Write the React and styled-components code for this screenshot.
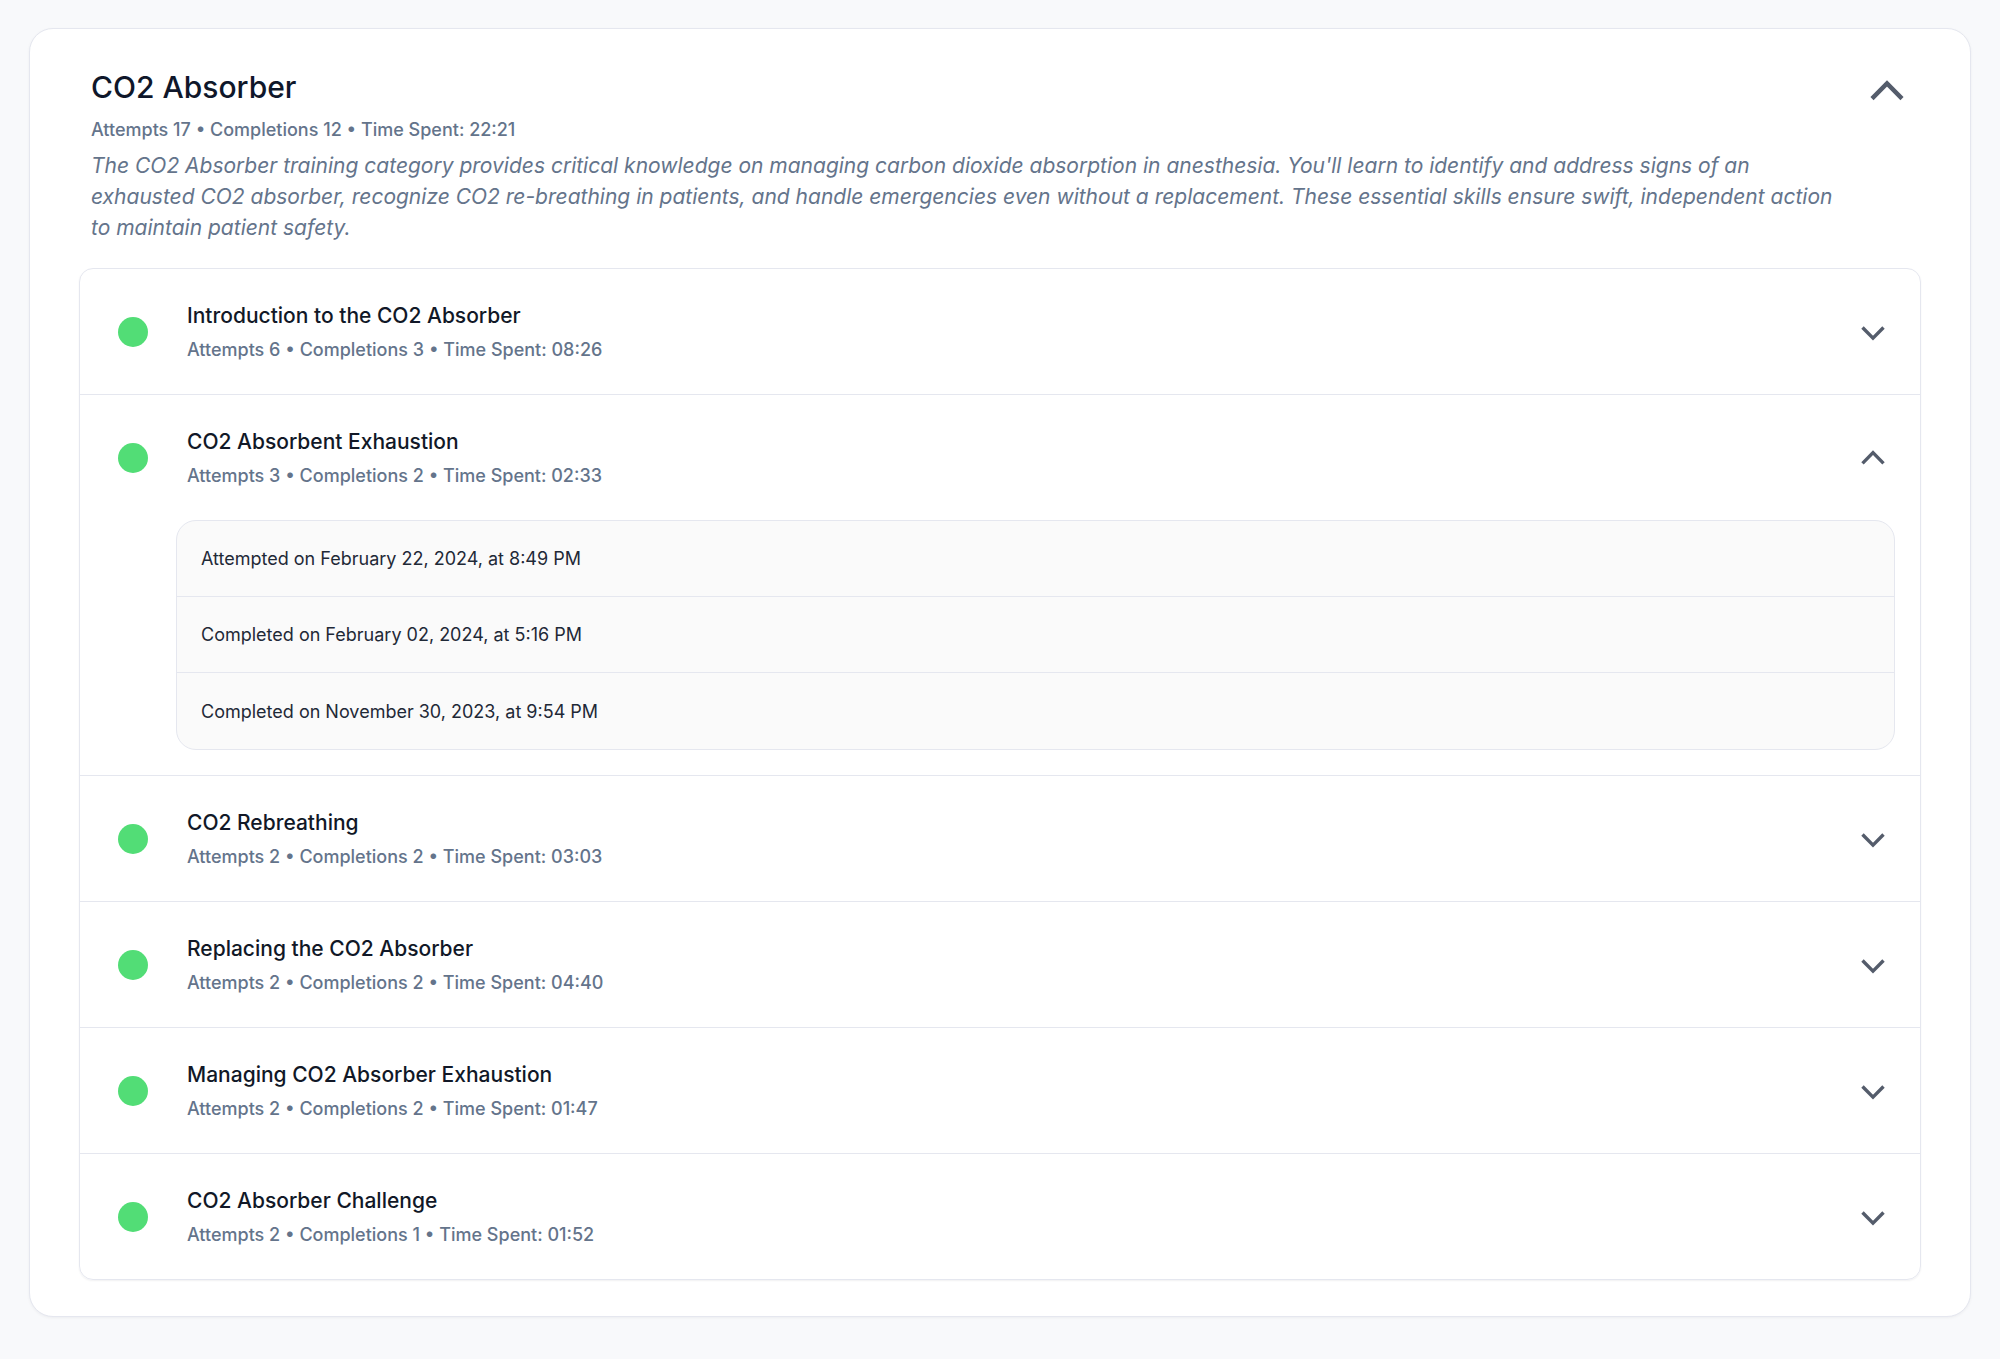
import React, { useState } from 'react';
import styled, { createGlobalStyle } from 'styled-components';

const GlobalStyle = createGlobalStyle`
  * {
    box-sizing: border-box;
  }

  body {
    margin: 0;
    background: #f8f9fb;
    font-family: Inter, "Noto Sans", sans-serif;
    color: #111827;
  }
`;

const Page = styled.div`
  min-height: 100vh;
  padding: 28px 29px;
`;

const Card = styled.section`
  background: #fff;
  border: 1px solid #e5e7ef;
  border-radius: 24px;
  box-shadow: 0 1px 3px rgba(15, 23, 42, 0.05);
  padding: 40px 49px 36px;
`;

const CategoryHeader = styled.header`
  display: flex;
  align-items: flex-start;
  gap: 24px;
  padding: 0 14px 0 12px;
  margin-bottom: 25px;
`;

const HeaderText = styled.div`
  flex: 1;
  min-width: 0;
`;

const CategoryTitle = styled.h1`
  margin: 0;
  font-size: 30px;
  line-height: 36px;
  font-weight: 500;
  color: #0f172a;
`;

const Stats = styled.p`
  margin: ${(p) => (p.large ? '13px' : '8px')} 0 0;
  font-size: 18px;
  line-height: 24px;
  font-weight: 500;
  color: #64748b;
`;

const Description = styled.p`
  margin: 8px 0 0;
  font-size: 21px;
  line-height: 31px;
  font-style: italic;
  color: #64748b;
`;

const ToggleButton = styled.button`
  display: flex;
  align-items: center;
  justify-content: center;
  flex-shrink: 0;
  padding: 0;
  border: none;
  background: none;
  cursor: pointer;
  color: #545c6b;
  margin-top: ${(p) => (p.large ? '2px' : '0')};
`;

const ModuleList = styled.ul`
  list-style: none;
  margin: 0;
  padding: 0;
  border: 1px solid #e5e7ef;
  border-radius: 14px;
  box-shadow: 0 1px 2px rgba(15, 23, 42, 0.06);
  overflow: hidden;
`;

const ModuleItem = styled.li`
  border-bottom: 1px solid #e5e7ef;

  &:last-child {
    border-bottom: none;
  }
`;

const ModuleHeader = styled.div`
  display: flex;
  align-items: center;
  min-height: 125px;
  padding: 0 33px 0 38px;
`;

const StatusDot = styled.span`
  width: 30px;
  height: 30px;
  border-radius: 50%;
  flex-shrink: 0;
  background: #52dd76;
  margin-right: 39px;
`;

const ModuleText = styled.div`
  flex: 1;
`;

const ModuleTitle = styled.h3`
  margin: 0;
  font-size: 21px;
  line-height: 28px;
  font-weight: 500;
  color: #111827;
`;

const History = styled.ul`
  list-style: none;
  margin: 0 25px 25px 96px;
  padding: 0;
  background: #fafafa;
  border: 1px solid #e5e7ef;
  border-radius: 20px;
  overflow: hidden;
`;

const HistoryRow = styled.li`
  display: flex;
  align-items: center;
  height: 76px;
  padding: 0 24px;
  font-size: 18px;
  color: #1f2937;
  border-bottom: 1px solid #e5e7ef;

  &:last-child {
    border-bottom: none;
  }
`;

const Chevron = ({ up, size, stroke }) => {
  const s = size;
  const pad = s * 0.125;
  const top = up ? s * 0.69 : s * 0.34;
  const bottom = up ? s * 0.31 : s * 0.72;
  const points = `${pad},${top} ${s / 2},${bottom} ${s - pad},${top}`;
  return (
    <svg width={s} height={s} viewBox={`0 0 ${s} ${s}`} fill="none">
      <polyline points={points} stroke="currentColor" strokeWidth={stroke} strokeLinejoin="miter" strokeLinecap="butt" />
    </svg>
  );
};

const modules = [
  {
    id: 1,
    title: 'Introduction to the CO2 Absorber',
    attempts: 6,
    completions: 3,
    time: '08:26',
    history: [],
  },
  {
    id: 2,
    title: 'CO2 Absorbent Exhaustion',
    attempts: 3,
    completions: 2,
    time: '02:33',
    history: [
      'Attempted on February 22, 2024, at 8:49 PM',
      'Completed on February 02, 2024, at 5:16 PM',
      'Completed on November 30, 2023, at 9:54 PM',
    ],
  },
  {
    id: 3,
    title: 'CO2 Rebreathing',
    attempts: 2,
    completions: 2,
    time: '03:03',
    history: [],
  },
  {
    id: 4,
    title: 'Replacing the CO2 Absorber',
    attempts: 2,
    completions: 2,
    time: '04:40',
    history: [],
  },
  {
    id: 5,
    title: 'Managing CO2 Absorber Exhaustion',
    attempts: 2,
    completions: 2,
    time: '01:47',
    history: [],
  },
  {
    id: 6,
    title: 'CO2 Absorber Challenge',
    attempts: 2,
    completions: 1,
    time: '01:52',
    history: [],
  },
];

const ModuleRow = ({ module, open, onToggle }) => (
  <ModuleItem>
    <ModuleHeader>
      <StatusDot />
      <ModuleText>
        <ModuleTitle>{module.title}</ModuleTitle>
        <Stats>
          Attempts {module.attempts} • Completions {module.completions} • Time Spent: {module.time}
        </Stats>
      </ModuleText>
      <ToggleButton onClick={onToggle} aria-label="Toggle details">
        <Chevron up={open} size={28} stroke={3.4} />
      </ToggleButton>
    </ModuleHeader>
    {open && module.history.length > 0 && (
      <History>
        {module.history.map((entry) => (
          <HistoryRow key={entry}>{entry}</HistoryRow>
        ))}
      </History>
    )}
  </ModuleItem>
);

const App = () => {
  const [categoryOpen, setCategoryOpen] = useState(true);
  const [openId, setOpenId] = useState(2);

  return (
    <>
      <GlobalStyle />
      <Page>
        <Card>
          <CategoryHeader>
            <HeaderText>
              <CategoryTitle>CO2 Absorber</CategoryTitle>
              <Stats large>Attempts 17 • Completions 12 • Time Spent: 22:21</Stats>
              <Description>
                The CO2 Absorber training category provides critical knowledge on managing carbon
                dioxide absorption in anesthesia. You&apos;ll learn to identify and address signs of an
                exhausted CO2 absorber, recognize CO2 re-breathing in patients, and handle emergencies
                even without a replacement. These essential skills ensure swift, independent action
                to maintain patient safety.
              </Description>
            </HeaderText>
            <ToggleButton large onClick={() => setCategoryOpen(!categoryOpen)} aria-label="Toggle category">
              <Chevron up={categoryOpen} size={40} stroke={4.4} />
            </ToggleButton>
          </CategoryHeader>
          {categoryOpen && (
            <ModuleList>
              {modules.map((m) => (
                <ModuleRow
                  key={m.id}
                  module={m}
                  open={openId === m.id}
                  onToggle={() => setOpenId(openId === m.id ? null : m.id)}
                />
              ))}
            </ModuleList>
          )}
        </Card>
      </Page>
    </>
  );
};

export default App;
